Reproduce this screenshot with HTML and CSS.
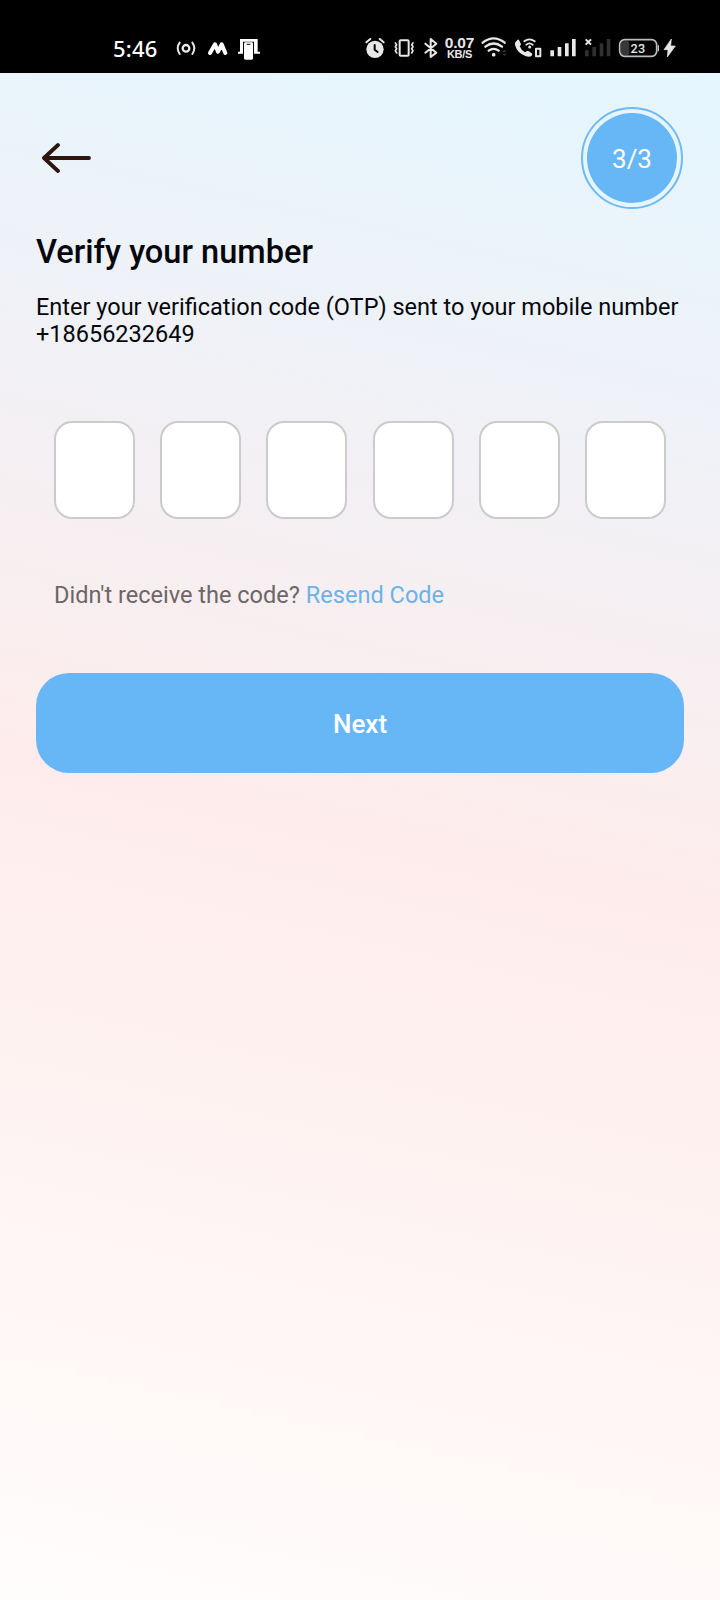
FILE: index.html
```html
<!DOCTYPE html>
<html lang="en">
<head>
<meta charset="utf-8">
<title>Verify your number</title>
<link rel="stylesheet" href="styles.css">
</head>
<body>
<header class="status">
  <span class="time">5:46</span>
  <div class="icons notices">
    <svg width="28" height="50" viewBox="222 0 84 150" class="line"><circle cx="258" cy="70" r="10" stroke-width="7"/><path stroke-width="6" d="M239 53Q227 70 239 87M277 53Q289 70 277 87"/></svg>
    <svg width="30" height="50" viewBox="306 0 90 150" class="line"><path stroke="#fff" stroke-width="12" d="M330 84L345 58L354 80L365 58L376 84"/></svg>
    <svg width="30" height="50" viewBox="396 0 90 150"><path fill="#fff" d="M420 42H473V80H480V86H462V50H429V86H414V80H420Z"/><rect x="432" y="52" width="27" height="52" rx="4" fill="#fff"/><path d="M440 58H451" stroke="#000" stroke-width="3"/></svg>
  </div>
  <div class="icons system">
    <svg width="27" height="50" viewBox="42 0 81 150" class="line"><circle cx="75" cy="73" r="26" fill="#e8e8e8" stroke="none"/><path stroke-width="6" d="M49 52L61 42M89 42L101 52"/><path stroke="#000" stroke-width="6" d="M74 60V74L83 81"/></svg>
    <svg width="29" height="50" viewBox="123 0 87 150" class="line"><rect x="149" y="46" width="27" height="46" rx="3" stroke-width="6"/><path stroke-width="5" d="M136 54L140 59L136 65L140 71L136 77L140 84M189 54L185 59L189 65L185 71L189 77L185 84"/></svg>
    <svg width="23" height="50" viewBox="210 0 69 150" class="line"><path stroke-width="6" d="M226 56L259 83L242 96V42L259 56L226 83"/></svg>
    <span class="speed"><b>0.07</b><small>KB/S</small></span>
    <svg width="30" height="50" viewBox="390 0 90 150" class="line"><path stroke-width="7" d="M398 53Q431 27 464 53M406 65Q431 46 456 65M416 77Q431 66 446 77"/><circle cx="431" cy="89" r="5.500" fill="#e8e8e8" stroke="none"/><path fill="#333" stroke="none" d="M457 81L463 74L470 81ZM457 86H470L463 93Z"/></svg>
    <svg width="36" height="50" viewBox="0 0 108 150" class="line"><path fill="#e8e8e8" stroke="none" d="M16 52L23 44Q26 43 28 47L33 57Q33 60 29 64Q34 76 45 82L51 78Q54 77 57 79L67 86Q68 89 64 93Q58 98 46 93Q21 83 15 60Q14 55 16 52Z"/><path stroke-width="5.500" d="M43 49Q58 37 74 49M49 59Q58 51 68 59"/><circle cx="59" cy="66" r="4.500" fill="#e8e8e8" stroke="none"/><rect x="78" y="71" width="13" height="23" stroke-width="6"/></svg>
    <svg width="36" height="50" viewBox="108 0 108 150"><path fill="#e8e8e8" d="M121 76H132V94H121ZM143 66H154V94H143ZM165 55H176V94H165ZM186 42H197V94H186Z"/></svg>
    <svg width="33" height="50" viewBox="216 0 99 150"><path fill="#303030" d="M225 76H236V94H225ZM247 66H258V94H247ZM269 55H280V94H269ZM290 42H301V94H290Z"/><path stroke="#e8e8e8" stroke-width="6" d="M227 43L243 59M243 43L227 59"/></svg>
    <svg width="46" height="50" viewBox="315 0 138 150" class="line"><rect x="333" y="48" width="25" height="43" rx="8" fill="#383838" stroke="none"/><rect x="329" y="44" width="111" height="50" rx="15" stroke="#bdbdbd" stroke-width="5"/><path stroke="#bdbdbd" stroke-width="4" d="M445 62V77"/><text x="384" y="84" text-anchor="middle" class="charge">23</text></svg>
    <svg width="17" height="50" viewBox="453 0 51 150"><path fill="#e8e8e8" stroke="#e8e8e8" stroke-width="2" stroke-linejoin="round" d="M484 42L462 74H474L472 96L496 63H482Z"/></svg>
  </div>
</header>
<main class="screen">
  <div class="topbar">
    <svg class="back" width="50" height="32" viewBox="0 0 50 32"><path d="M47 16H2M16 3L2 16L16 29"/></svg>
    <div class="step"><div class="step-fill">3/3</div></div>
  </div>
  <h1 class="title">Verify your number</h1>
  <p class="intro">Enter your verification code (OTP) sent to your mobile number<br>+18656232649</p>
  <div class="code">
    <div class="digit"></div><div class="digit"></div><div class="digit"></div><div class="digit"></div><div class="digit"></div><div class="digit"></div>
  </div>
  <p class="resend">Didn't receive the code? <a class="link">Resend Code</a></p>
  <button class="next">Next</button>
</main>
</body>
</html>
```
FILE: styles.css
```css
* { box-sizing: border-box; }
body {
  margin: 0;
  height: 1600px;
  display: flex;
  flex-direction: column;
  font-family: Roboto, sans-serif;
  color: #05070c;
}
.status {
  height: 73px;
  flex: none;
  display: flex;
  align-items: flex-start;
  padding: 25px 0 0 113px;
  background: #000;
  overflow: hidden;
}
.time {
  width: 61px;
  font: 500 22px/46px "Noto Sans", sans-serif;
  letter-spacing: 0.2px;
  color: #fff;
}
.icons { display: flex; flex: none; }
.system { margin-left: 102px; }
.icons svg { display: block; flex: none; }
.line { fill: none; stroke: #e8e8e8; stroke-linecap: round; stroke-linejoin: round; }
.charge { font: 500 38px Roboto, sans-serif; letter-spacing: 1px; fill: #e8e8e8; stroke: none; }
.speed {
  width: 37px;
  padding: 10px 4px 0 0;
  display: flex;
  flex-direction: column;
  align-items: center;
  font-family: "Liberation Sans", sans-serif;
  color: #e8e8e8;
}
.speed b { font-size: 15.5px; line-height: 15px; font-weight: 700; letter-spacing: -0.2px; }
.speed small { font-size: 11px; line-height: 9px; font-weight: 700; letter-spacing: -0.3px; }
.screen {
  flex: 1;
  padding: 34px 36px 0;
  background: linear-gradient(192.5deg, #e4f6ff 0%, #feecec 50%, #fffdfc 100%);
}
.topbar {
  height: 102px;
  display: flex;
  align-items: center;
  justify-content: space-between;
  padding: 0 1px 0 6px;
}
.back { fill: none; stroke: #2c160e; stroke-width: 3.8; stroke-linecap: round; stroke-linejoin: round; }
.step {
  width: 102px;
  height: 102px;
  border: 2px solid #70b9f2;
  border-radius: 50%;
  display: grid;
  place-items: center;
}
.step-fill {
  width: 90px;
  height: 90px;
  border-radius: 50%;
  background: #67b7f7;
  color: #fff;
  font-size: 26px;
  line-height: 93px;
  text-align: center;
}
.title {
  margin: 22px 0 0;
  font-size: 32.6px;
  line-height: 42px;
  font-weight: 500;
}
.intro {
  margin: 21px 0 0;
  font-size: 23.5px;
  line-height: 27px;
  white-space: nowrap;
}
.code {
  margin: 73px 18px 0;
  display: flex;
  justify-content: space-between;
}
.digit {
  width: 81px;
  height: 98px;
  border: 2px solid #cbcbcd;
  border-radius: 18px;
  background: #fff;
}
.resend {
  margin: 61px 18px 0;
  font-size: 23.55px;
  line-height: 30px;
  color: #6c6667;
}
.link { color: #6ab3ea; }
.next {
  display: block;
  width: 648px;
  height: 100px;
  margin: 63px 0 0;
  padding: 2px 0 0;
  border: 0;
  border-radius: 33px;
  background: #67b7f7;
  color: #fff;
  font: 500 26px/32px Roboto, sans-serif;
}
```
